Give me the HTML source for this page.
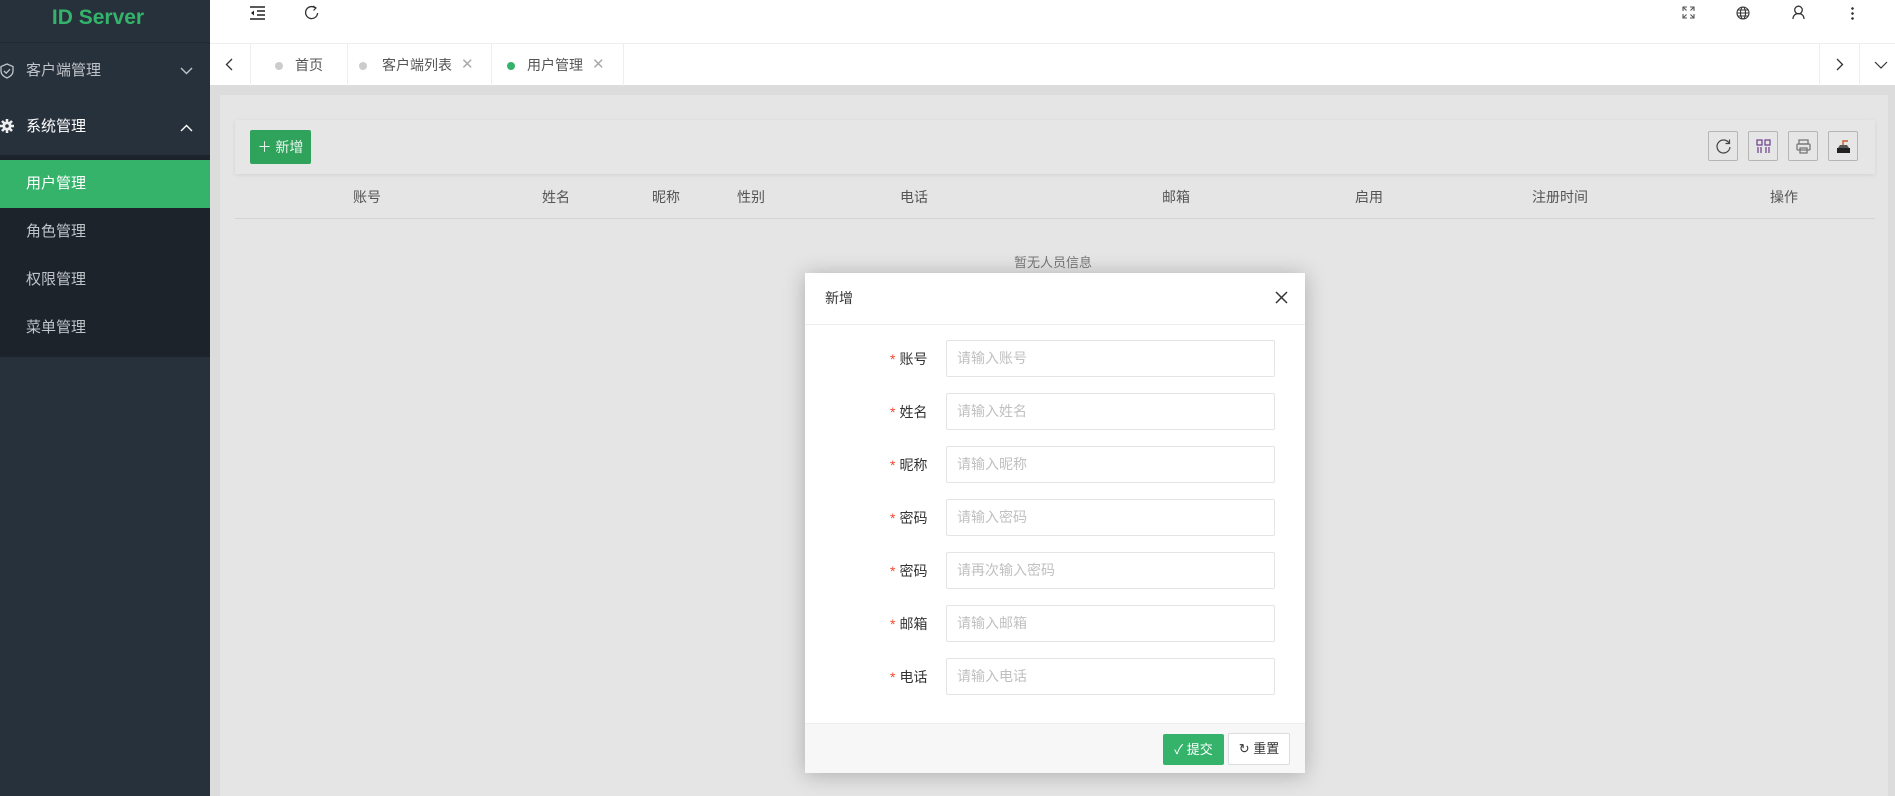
<!DOCTYPE html>
<html><head><meta charset="utf-8">
<style>
*{margin:0;padding:0;box-sizing:border-box}
body{width:1895px;height:796px;overflow:hidden;position:relative;background:#dcdcdc;font-family:"Liberation Sans","Noto Sans CJK SC",sans-serif;font-size:14px;color:#333}
.abs{position:absolute}
#side{left:0;top:0;width:210px;height:796px;background:#27313c}
.logo{left:0;top:4px;width:196px;text-align:center;color:#34b36a;font-weight:bold;font-size:21px;line-height:28px}
.mi{left:26px;color:#bfc4c9;font-size:15px;line-height:20px}
#sub{left:0;top:155px;width:210px;height:202px;background:#1d232b}
#act{left:0;top:160px;width:210px;height:48px;background:#35b36b}
#top{left:210px;top:0;width:1685px;height:43px;background:#fff}
#tabs{left:210px;top:43px;width:1685px;height:42px;background:#fff;border-top:1px solid #eee}
.vl{top:0;width:1px;height:42px;background:#eee}
.tt{top:13px;font-size:14px;color:#555;line-height:16px}
.dot{top:18px;width:8px;height:8px;border-radius:50%;background:#ccc}
.x{top:11px;color:#aaa;font-size:15px}
#panel{left:220px;top:95px;width:1668px;height:701px;background:#e5e5e5}
#tool{left:235px;top:120px;width:1640px;height:54px;background:#e6e6e6;box-shadow:0 1px 4px rgba(0,0,0,.08)}
#add{left:250px;top:130px;width:61px;height:34px;background:#2fa35c;border-radius:2px;color:#eaf5ee;font-size:14px;line-height:34px;text-align:center}
.tb{top:131px;width:30px;height:30px;border:1px solid #b5b5b5;border-radius:2px}
.th{top:187px;color:#555;font-size:14px}
#modal{left:805px;top:273px;width:500px;height:500px;background:#fff;box-shadow:0 2px 20px rgba(0,0,0,.25)}
.lab{left:87px;font-size:14px;color:#333;width:40px}
.lab b{color:#f24a29;font-weight:normal;margin-right:4px}
.inp{left:141px;width:329px;height:37px;border:1px solid #e4e4e4;border-radius:2px;color:#c0c0c0;font-size:14px;line-height:35px;padding-left:10px}
</style></head><body>
<div id="side" class="abs">
<div class="abs logo">ID Server</div>
<div class="abs" style="left:0;top:42px;width:210px;height:1px;background:#202830"></div>
<svg class="abs" style="left:0;top:63px" width="14" height="16" viewBox="0 0 14 16"><path d="M7 1L1 3.5V8c0 3 2.5 5.5 6 7 3.5-1.5 6-4 6-7V3.5z" fill="none" stroke="#bfc4c9" stroke-width="1.3"/><path d="M4 8l2.2 2.2L10 6.2" fill="none" stroke="#bfc4c9" stroke-width="1.3"/></svg>
<div class="abs mi" style="top:61px">客户端管理</div>
<svg class="abs" style="left:180px;top:67px" width="13" height="8"><path d="M1 1l5.5 5.5L12 1" fill="none" stroke="#bfc4c9" stroke-width="1.4"/></svg>
<svg class="abs" style="left:0;top:119px" width="14" height="14" viewBox="0 0 14 14"><g stroke="#eee" stroke-width="2.6"><path d="M7 0v14M0 7h14M2 2l10 10M12 2L2 12"/></g><circle cx="7" cy="7" r="4.5" fill="#eee"/><circle cx="7" cy="7" r="1.8" fill="#27313c"/></svg>
<div class="abs mi" style="top:117px;color:#fff">系统管理</div>
<svg class="abs" style="left:180px;top:124px" width="13" height="8"><path d="M1 7l5.5-5.5L12 7" fill="none" stroke="#fff" stroke-width="1.4"/></svg>
</div>
<div id="sub" class="abs"></div>
<div id="act" class="abs"></div>
<div class="abs mi" style="top:174px;color:#fff">用户管理</div>
<div class="abs mi" style="top:222px">角色管理</div>
<div class="abs mi" style="top:270px">权限管理</div>
<div class="abs mi" style="top:318px">菜单管理</div>

<div id="top" class="abs">
<svg class="abs" style="left:40px;top:6px" width="16" height="14"><path d="M0 1h15M7 5h8M7 9h8M0 13h15" stroke="#222" stroke-width="1.6"/><path d="M4 4.5L1 7l3 2.5z" fill="#222"/></svg>
<svg class="abs" style="left:95px;top:5px" width="14" height="15"><path d="M10.5 3A6 6 0 1 0 12.6 8" fill="none" stroke="#333" stroke-width="1.3"/><path d="M8 1l3 2-2.5 2.5" fill="none" stroke="#333" stroke-width="1.2"/></svg>
<svg class="abs" style="left:1472px;top:6px" width="13" height="13" stroke="#555" stroke-width="1.1" fill="none"><path d="M1 5V1h4M1 1l3.5 3.5M12 5V1H8M12 1L8.5 4.5M1 8v4h4M1 12l3.5-3.5M12 8v4H8M12 12L8.5 8.5"/></svg>
<svg class="abs" style="left:1526px;top:6px" width="14" height="14" stroke="#333" stroke-width="1.1" fill="none"><circle cx="7" cy="7" r="6"/><ellipse cx="7" cy="7" rx="2.5" ry="6"/><path d="M1 7h12M2 4h10M2 10h10"/></svg>
<svg class="abs" style="left:1582px;top:5px" width="13" height="15" stroke="#333" stroke-width="1.3" fill="none"><circle cx="6.5" cy="5" r="3.8"/><path d="M1 14c0-3.5 2.5-5.5 5.5-5.5S12 10.5 12 14"/></svg>
<div class="abs" style="left:1641px;top:6px;width:3px;height:14px;background:radial-gradient(circle,#333 1.2px,transparent 1.4px) 0 0/3px 5px"></div>
</div>

<div id="tabs" class="abs">
<svg class="abs" style="left:15px;top:14px" width="8" height="13"><path d="M7 1L1.5 6.5 7 12" fill="none" stroke="#333" stroke-width="1.3"/></svg>
<div class="abs vl" style="left:40px"></div>
<div class="abs vl" style="left:137px"></div>
<div class="abs vl" style="left:281px"></div>
<div class="abs vl" style="left:413px"></div>
<div class="abs dot" style="left:65px"></div><div class="abs tt" style="left:85px">首页</div>
<div class="abs dot" style="left:149px"></div><div class="abs tt" style="left:172px">客户端列表</div><div class="abs x" style="left:251px">✕</div>
<div class="abs dot" style="left:297px;background:#35b36b"></div><div class="abs tt" style="left:317px">用户管理</div><div class="abs x" style="left:382px">✕</div>
<div class="abs vl" style="left:1609px"></div>
<div class="abs vl" style="left:1649px"></div>
<svg class="abs" style="left:1626px;top:14px" width="8" height="13"><path d="M1 1l5.5 5.5L1 12" fill="none" stroke="#333" stroke-width="1.3"/></svg>
<svg class="abs" style="left:1664px;top:17px" width="14" height="8"><path d="M1 1l6 6 6-6" fill="none" stroke="#333" stroke-width="1.2"/></svg>
</div>

<div id="panel" class="abs"></div>
<div id="tool" class="abs"></div>
<div id="add" class="abs">＋ 新增</div>
<div class="abs tb" style="left:1708px"><svg style="margin:6px" width="17" height="17" fill="none" stroke="#444" stroke-width="1.2"><path d="M14 5A6.5 6.5 0 1 0 15 9"/><path d="M14.5 1.5V5.5H10.5"/></svg></div>
<div class="abs tb" style="left:1748px"><svg style="margin:6px" width="17" height="17" fill="none" stroke="#6a3c8a" stroke-width="1.2"><rect x="2" y="2" width="5" height="5"/><rect x="10" y="2" width="5" height="5"/><path d="M3 9v6M6 9v6M11 9v6M14 9v6"/></svg></div>
<div class="abs tb" style="left:1788px"><svg style="margin:6px" width="17" height="17" fill="none" stroke="#777" stroke-width="1.3"><rect x="4" y="2" width="9" height="4"/><rect x="2" y="6" width="13" height="6" rx="1"/><rect x="5" y="10" width="7" height="5"/></svg></div>
<div class="abs tb" style="left:1828px"><svg style="margin:6px" width="17" height="17"><rect x="2" y="10" width="13" height="5" fill="#222"/><path d="M3 10l2-3h7l2 3z" fill="#555"/><path d="M8 7V3h5" fill="none" stroke="#c25a2c" stroke-width="1.4"/></svg></div>
<div class="abs th" style="left:353px">账号</div>
<div class="abs th" style="left:542px">姓名</div>
<div class="abs th" style="left:652px">昵称</div>
<div class="abs th" style="left:737px">性别</div>
<div class="abs th" style="left:900px">电话</div>
<div class="abs th" style="left:1162px">邮箱</div>
<div class="abs th" style="left:1355px">启用</div>
<div class="abs th" style="left:1532px">注册时间</div>
<div class="abs th" style="left:1770px">操作</div>
<div class="abs" style="left:235px;top:218px;width:1640px;height:1px;background:#d4d4d4"></div>
<div class="abs" style="left:1014px;top:252px;color:#777;font-size:13px">暂无人员信息</div>

<div id="modal" class="abs">
<div class="abs" style="left:20px;top:15px;font-size:14px;color:#333">新增</div>
<svg class="abs" style="left:470px;top:18px" width="13" height="13"><path d="M1 1l11 11M12 1L1 12" stroke="#333" stroke-width="1.5"/></svg>
<div class="abs" style="left:0;top:51px;width:500px;height:1px;background:#eee"></div>
<div class="abs lab" style="top:76px;left:85px;width:60px"><b>*</b>账号</div><div class="abs inp" style="top:67px">请输入账号</div>
<div class="abs lab" style="top:129px;left:85px;width:60px"><b>*</b>姓名</div><div class="abs inp" style="top:120px">请输入姓名</div>
<div class="abs lab" style="top:182px;left:85px;width:60px"><b>*</b>昵称</div><div class="abs inp" style="top:173px">请输入昵称</div>
<div class="abs lab" style="top:235px;left:85px;width:60px"><b>*</b>密码</div><div class="abs inp" style="top:226px">请输入密码</div>
<div class="abs lab" style="top:288px;left:85px;width:60px"><b>*</b>密码</div><div class="abs inp" style="top:279px">请再次输入密码</div>
<div class="abs lab" style="top:341px;left:85px;width:60px"><b>*</b>邮箱</div><div class="abs inp" style="top:332px">请输入邮箱</div>
<div class="abs lab" style="top:394px;left:85px;width:60px"><b>*</b>电话</div><div class="abs inp" style="top:385px">请输入电话</div>
<div class="abs" style="left:0;top:450px;width:500px;height:50px;background:#f7f7f7;border-top:1px solid #eee"></div>
<div class="abs" style="left:358px;top:461px;width:61px;height:31px;background:#35b36b;border-radius:2px;color:#fff;font-size:13px;line-height:31px;text-align:center">✓ 提交</div>
<div class="abs" style="left:423px;top:460px;width:62px;height:32px;background:#fff;border:1px solid #ddd;border-radius:2px;color:#333;font-size:13px;line-height:30px;text-align:center">↻ 重置</div>
</div>
</body></html>
